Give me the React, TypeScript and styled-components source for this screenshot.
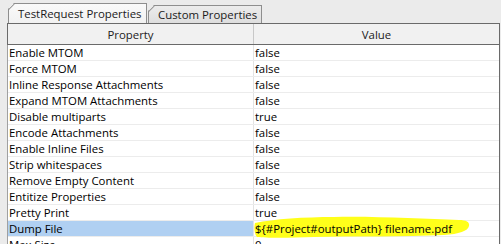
import React from "react";
import styled, { createGlobalStyle } from "styled-components";

const Global = createGlobalStyle`
  html, body { margin: 0; padding: 0; background: #ebebeb; }
  body { font-family: "Open Sans", "Noto Sans", sans-serif; font-size: 11.4px; color: #000; }
`;

const Page = styled.div`
  width: 501px;
  height: 244px;
  overflow: hidden;
  padding-top: 3px;
  box-sizing: border-box;
`;

const TabBar = styled.div`
  display: flex;
  align-items: flex-end;
  height: 20px;
  padding-left: 8px;
  gap: 1px;
`;

const Tab = styled.div<{ $active?: boolean; $w: number; $pl: number }>`
  position: relative;
  width: ${(p) => p.$w}px;
  height: ${(p) => (p.$active ? 20 : 18)}px;
  padding-left: ${(p) => p.$pl}px;
  display: flex;
  align-items: center;
  box-sizing: border-box;
  font-size: 11.4px;
  color: #1a1a1a;
  white-space: nowrap;
  background: ${(p) =>
    p.$active ? "linear-gradient(#fafafa, #f1f1f1)" : "linear-gradient(#ececec, #dedede)"};
  border: 1px solid #8e8e8e;
  border-bottom: none;
  clip-path: polygon(6px 0, 100% 0, 100% 100%, 0 100%, 0 6px);
  &::before {
    content: "";
    position: absolute;
    left: -1px;
    top: -1px;
    width: 9px;
    height: 1px;
    background: #8e8e8e;
    transform-origin: 0 0;
    transform: translate(0, 6.5px) rotate(-45deg);
  }
`;

const Table = styled.div`
  margin-left: 7px;
  width: 493px;
`;

const Header = styled.div`
  display: grid;
  grid-template-columns: 246px 1fr;
  height: 22px;
  box-sizing: border-box;
  border: 1px solid #6a6a6a;
  background: #f1f1f1;
`;

const HeadCell = styled.div<{ $last?: boolean }>`
  display: flex;
  align-items: center;
  justify-content: center;
  font-size: 11.4px;
  color: #222;
  border-right: ${(p) => (p.$last ? "none" : "1px solid #c8c8c8")};
`;

const Body = styled.div`
  border-left: 1px solid #a0a0a0;
  border-right: 1px solid #6a6a6a;
  background: #fff;
`;

const Row = styled.div`
  position: relative;
  display: grid;
  grid-template-columns: 246px 1fr;
  height: 16px;
  box-sizing: border-box;
  border-bottom: 1px solid #ececec;
`;

const Cell = styled.div<{ $selected?: boolean; $value?: boolean }>`
  display: flex;
  align-items: center;
  padding-left: 1px;
  font-size: 11.4px;
  white-space: nowrap;
  overflow: hidden;
  background: ${(p) => (p.$selected ? "#b0d0f2" : "transparent")};
  border-right: ${(p) => (p.$value ? "none" : "1px solid #e3e3e3")};
`;

const ValueText = styled.span`
  position: relative;
  z-index: 1;
`;

const Marker = styled.svg`
  position: absolute;
  left: 246px;
  top: -8px;
  width: 220px;
  height: 26px;
  z-index: 0;
  pointer-events: none;
`;

const rows: [string, string][] = [
  ["Enable MTOM", "false"],
  ["Force MTOM", "false"],
  ["Inline Response Attachments", "false"],
  ["Expand MTOM Attachments", "false"],
  ["Disable multiparts", "true"],
  ["Encode Attachments", "false"],
  ["Enable Inline Files", "false"],
  ["Strip whitespaces", "false"],
  ["Remove Empty Content", "false"],
  ["Entitize Properties", "false"],
  ["Pretty Print", "true"],
  ["Dump File", "${#Project#outputPath} filename.pdf"],
  ["Max Size", "0"],
];

export default function App() {
  return (
    <Page>
      <Global />
      <TabBar>
        <Tab $active $w={139} $pl={9}>TestRequest Properties</Tab>
        <Tab $w={114} $pl={9}>Custom Properties</Tab>
      </TabBar>
      <Table>
        <Header>
          <HeadCell>Property</HeadCell>
          <HeadCell $last>Value</HeadCell>
        </Header>
        <Body>
          {rows.map(([k, v]) => {
            const sel = k === "Dump File";
            return (
              <Row key={k}>
                <Cell $selected={sel}>{k}</Cell>
                <Cell $value>
                  <ValueText>{v}</ValueText>
                </Cell>
                {sel && (
                  <Marker viewBox="0 0 220 26">
                    <path
                      d="M1 10 C 20 6, 50 4, 80 4 C 120 3, 170 6, 205 7 C 212 7, 216 9, 215 13 C 214 18, 205 21, 190 22 C 150 24, 100 23, 60 24 C 35 25, 12 25, 3 24 C 0 20, 0 14, 1 10 Z"
                      fill="#ffff1a"
                    />
                  </Marker>
                )}
              </Row>
            );
          })}
        </Body>
      </Table>
    </Page>
  );
}
